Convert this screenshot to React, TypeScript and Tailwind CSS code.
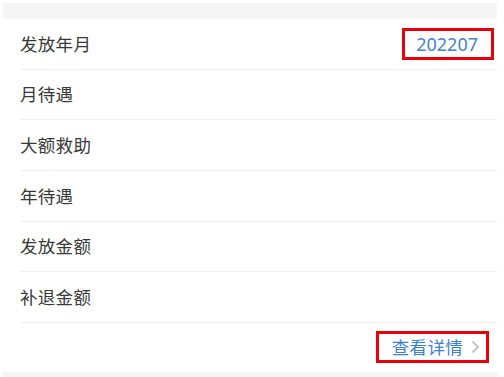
import React from "react";

const rows = ["发放年月", "月待遇", "大额救助", "年待遇", "发放金额", "补退金额"];

export default function App() {
  return (
    <div
      className="w-[504px] h-[377px] bg-white pt-[3px] pl-[3px] pr-[7px] overflow-hidden"
      style={{ fontFamily: '"Noto Sans", "Noto Sans CJK SC", sans-serif' }}
    >
      <div className="h-[16px] bg-[#f5f5f6]" />
      <div className="bg-white">
        {rows.map((r, i) => (
          <div key={r} className="pl-[17px]">
            <div className="h-[50.67px] border-b border-[#f0f0f0] flex items-center justify-between pr-[19px]">
              <span className="text-[17.5px] leading-[20px] text-[#383838] tracking-[0.3px]">{r}</span>
              {i === 0 && (
                <span className="relative text-[18px] leading-[20px] text-[#4a82c9]">
                  202207
                  <span className="absolute left-[-14px] right-[-16px] top-[-6px] bottom-[-6px] border-[3px] border-[#e8000b]" />
                </span>
              )}
            </div>
          </div>
        ))}
        <div className="h-[49px] flex items-center justify-end pr-[17px]">
          <span className="relative flex items-center text-[17.5px] leading-[20px] text-[#3f7fd0]">
            <span className="tracking-[0.3px]">查看详情</span>
            <svg width="9" height="14" viewBox="0 0 9 14" className="ml-[8px]">
              <path d="M1.5 1.5 L7 7 L1.5 12.5" fill="none" stroke="#c4c4c4" strokeWidth="1.9" />
            </svg>
            <span className="absolute left-[-16px] right-[-9px] top-[-6px] bottom-[-6px] border-[3px] border-[#e8000b]" />
          </span>
        </div>
      </div>
      <div className="h-[10px] bg-[#f5f5f6]" />
    </div>
  );
}
